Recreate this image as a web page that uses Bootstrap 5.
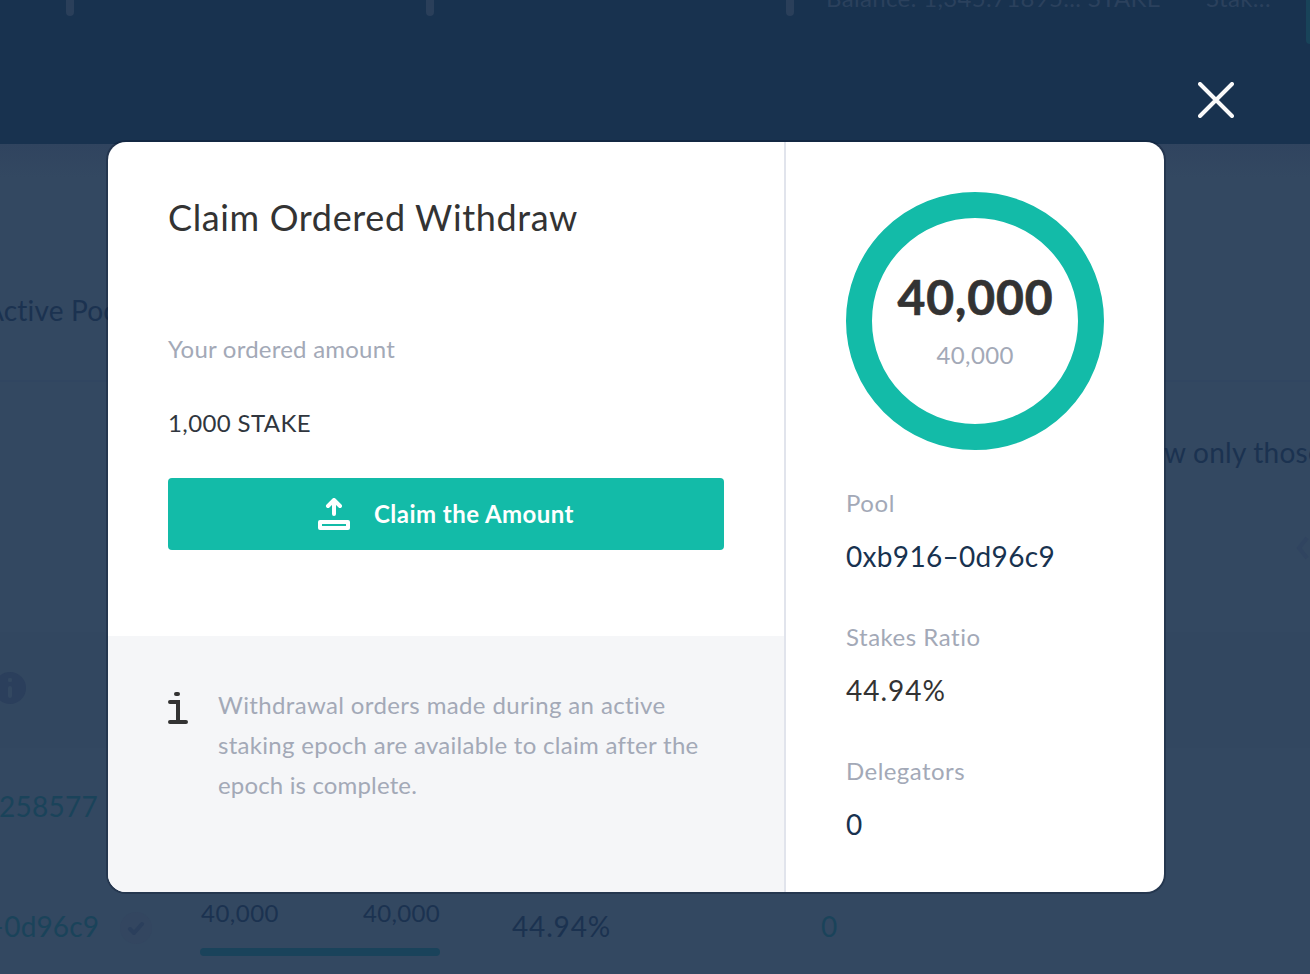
<!DOCTYPE html>
<html lang="en">
<head>
<meta charset="utf-8">
<meta name="viewport" content="width=device-width, initial-scale=1">
<title>Claim Ordered Withdraw</title>
<link href="https://cdn.jsdelivr.net/npm/bootstrap@5.3.0/dist/css/bootstrap.min.css" rel="stylesheet">
<style>
  body { font-family: Lato, "Open Sans", sans-serif; background: #334861; color: #1b3250; height: 974px; }
  .t24 { font-size: 24px; line-height: 40px; }
  .t28 { font-size: 28px; line-height: 42px; }
  /* dimmed page */
  .top-area { height: 144px; background: #18324f; color: #2b415d; }
  .tab-bar { width: 8px; height: 16px; border-radius: 0 0 4px 4px; background: #2a3f5a; margin-right: 352px; }
  .tab-bar.last { margin-right: 32px; }
  .balance { margin-top: -22px; width: 380px; }
  .teal-box { width: 4px; height: 44px; border-radius: 0 0 0 4px; background: #184359; }
  .head-row { height: 238px; padding-top: 145px; background: linear-gradient(#30445f, #334861 34px); border-bottom: 2px solid #314661; }
  .filter-row { height: 250px; padding-top: 49px; }
  .cols-row { height: 116px; background: #324760; }
  .data-row { height: 119px; }
  .teal { color: #1a435a; }
  .pool-cell { width: 99px; }
  .stake-cell { width: 240px; }
  .stake-bar { height: 8px; border-radius: 4px; background: #1a435b; margin-top: 15px; }
  /* dialog */
  .overlay { padding: 142px 146px 0 108px; }
  .dialog-box { height: 750px; border-radius: 18px; box-shadow: 0 0 0 2px rgba(10, 22, 42, .32); }
  .main-col { width: 676px; }
  .main-part { height: 494px; padding: 53px 60px 0; }
  .dialog-title { font-size: 36px; line-height: 44px; color: #333; }
  .label { color: #a3a9b7; }
  .claim-btn { height: 72px; border-radius: 4px; background: #13bba8; color: #fff; font-weight: 700; font-size: 24px; gap: 24px; margin-top: 35px; }
  .note { background: #f5f6f8; padding: 49px 60px 0; gap: 30px; }
  .side-col { border-left: 2px solid #e1e4ec; padding: 50px 60px 0; }
  .navy { color: #18324f; }
  .close-x { top: 82px; left: 1198px; }
</style>
</head>
<body class="overflow-hidden">

<div class="top-area d-flex align-items-start overflow-hidden text-nowrap">
  <div class="tab-bar flex-shrink-0" style="margin-left:66px"></div>
  <div class="tab-bar flex-shrink-0"></div>
  <div class="tab-bar last flex-shrink-0"></div>
  <div class="balance t24 d-flex flex-shrink-0"><span class="fit" data-w="335">Balance: 1,345.71895... STAKE</span><span class="fit" data-w="65" style="margin-left:45px">Stak...</span></div>
  <div class="teal-box flex-shrink-0 ms-auto"></div>
</div>
<div class="head-row"><div class="t28 text-nowrap" style="margin-left:-15px"><span class="fit" data-w="154">Active Pools</span></div></div>
<div class="filter-row d-flex justify-content-end overflow-hidden">
  <div class="d-flex flex-column align-items-end text-nowrap">
    <div class="t28" style="margin-right:-13px"><span class="fit" data-w="206">Show only those</span></div>
    <svg class="mt-auto" width="14" height="24" viewBox="0 0 14 24" style="margin-bottom:72px"><path d="M11 2 3 12l8 10" fill="none" stroke="#304460" stroke-width="4"/></svg>
  </div>
</div>
<div class="cols-row d-flex align-items-center">
  <svg width="32" height="32" viewBox="0 0 32 32" style="margin:-4px 0 0 -6px"><circle cx="16" cy="16" r="16" fill="#2b3f5c"/><circle cx="16" cy="8" r="2.2" fill="#334861"/><path d="M16 16v8" stroke="#334861" stroke-width="4" stroke-linecap="round"/></svg>
</div>
<div class="data-row t28 teal d-flex justify-content-start pt-4">
  <div class="pool-cell d-flex justify-content-end" style="padding:13px 1px 0 0"><span class="fit" data-w="99">258577</span></div>
</div>
<div class="data-row t28 d-flex align-items-start text-nowrap">
  <div class="pool-cell teal d-flex justify-content-end" style="padding-top:38px"><span class="fit" data-w="111">–0d96c9</span></div>
  <svg width="32" height="32" viewBox="0 0 32 32" style="margin:45px 0 0 21px"><circle cx="16" cy="16" r="16" fill="#334660"/><path d="m10 17 4 4 8-9" fill="none" stroke="#2b3f5c" stroke-width="4" stroke-linecap="round" stroke-linejoin="round"/></svg>
  <div class="stake-cell t24" style="margin:26px 0 0 48px">
    <div class="d-flex justify-content-between" style="padding-left:1px"><span class="fit" data-w="78">40,000</span><span class="fit" data-w="77">40,000</span></div>
    <div class="stake-bar"></div>
  </div>
  <div style="margin:38px 0 0 72px;width:309px"><span class="fit" data-w="99">44.94%</span></div>
  <div class="teal" style="margin-top:38px">0</div>
</div>

<div class="overlay position-absolute top-0 start-0 w-100">
  <div class="dialog-box bg-white d-flex overflow-hidden">
    <div class="main-col d-flex flex-column">
      <div class="main-part">
        <h1 class="dialog-title fw-normal mb-0"><span class="fit" data-w="410">Claim Ordered Withdraw</span></h1>
        <div class="label t24" style="margin-top:90px"><span class="fit" data-w="227">Your ordered amount</span></div>
        <div class="t24" style="margin-top:34px;color:#30363e"><span class="fit" data-w="143">1,000 STAKE</span></div>
        <button type="button" class="claim-btn btn w-100 p-0 border-0 d-flex align-items-center justify-content-center">
          <svg width="32" height="32" viewBox="0 0 32 32" fill="none" stroke="#fff" stroke-width="4" stroke-linecap="round" stroke-linejoin="round"><path d="M16 16V3M10 8l6-6 6 6M2 24h28v6H2z"/></svg>
          <span class="fit" data-w="200">Claim the Amount</span>
        </button>
      </div>
      <div class="note d-flex align-items-start flex-grow-1">
        <svg class="flex-shrink-0" width="20" height="32" viewBox="0 0 20 32" style="margin-top:7px" fill="none" stroke="#333" stroke-width="4" stroke-linecap="round"><path d="M2 10h8v18M2 30h16"/><rect x="6" width="6" height="4" rx="2" fill="#333" stroke="none"/></svg>
        <div class="label t24 text-nowrap"><span class="fit" data-w="448">Withdrawal orders made during an active</span><br><span class="fit" data-w="480">staking epoch are available to claim after the</span><br><span class="fit" data-w="199">epoch is complete.</span></div>
      </div>
    </div>
    <div class="side-col flex-grow-1">
      <svg class="d-block" width="258" height="258" viewBox="0 0 258 258" text-anchor="middle">
        <circle cx="129" cy="129" r="116" fill="none" stroke="#13bba8" stroke-width="26"/>
        <text x="129" y="123" font-size="48" font-weight="700" fill="#333" stroke="#333" stroke-width=".7" textLength="155">40,000</text>
        <text x="129" y="172" font-size="24" fill="#a3a9b7" textLength="77">40,000</text>
      </svg>
      <div class="label t24" style="margin-top:33px"><span class="fit" data-w="49">Pool</span></div>
      <div class="t28 navy" style="margin-top:12px"><span class="fit" data-w="209">0xb916–0d96c9</span></div>
      <div class="label t24" style="margin-top:40px"><span class="fit" data-w="135">Stakes Ratio</span></div>
      <div class="t28" style="margin-top:12px;color:#333"><span class="fit" data-w="100">44.94%</span></div>
      <div class="label t24" style="margin-top:40px"><span class="fit" data-w="119">Delegators</span></div>
      <div class="t28 navy" style="margin-top:12px">0</div>
    </div>
  </div>
  <svg class="close-x position-absolute" width="36" height="36" viewBox="0 0 36 36" role="button" aria-label="Close"><path d="m2 2 32 32M34 2 2 34" stroke="#fafafa" stroke-width="4" stroke-linecap="round"/></svg>
</div>

<script src="https://cdn.jsdelivr.net/npm/bootstrap@5.3.0/dist/js/bootstrap.bundle.min.js"></script>
<script>
  // Track each label so that it fills the width set in data-w.
  document.querySelectorAll('.fit').forEach(function (el) {
    el.style.letterSpacing = '0px';
    var spare = parseFloat(el.dataset.w) - el.getBoundingClientRect().width;
    el.style.letterSpacing = (spare / el.textContent.length) + 'px';
  });
</script>
</body>
</html>
